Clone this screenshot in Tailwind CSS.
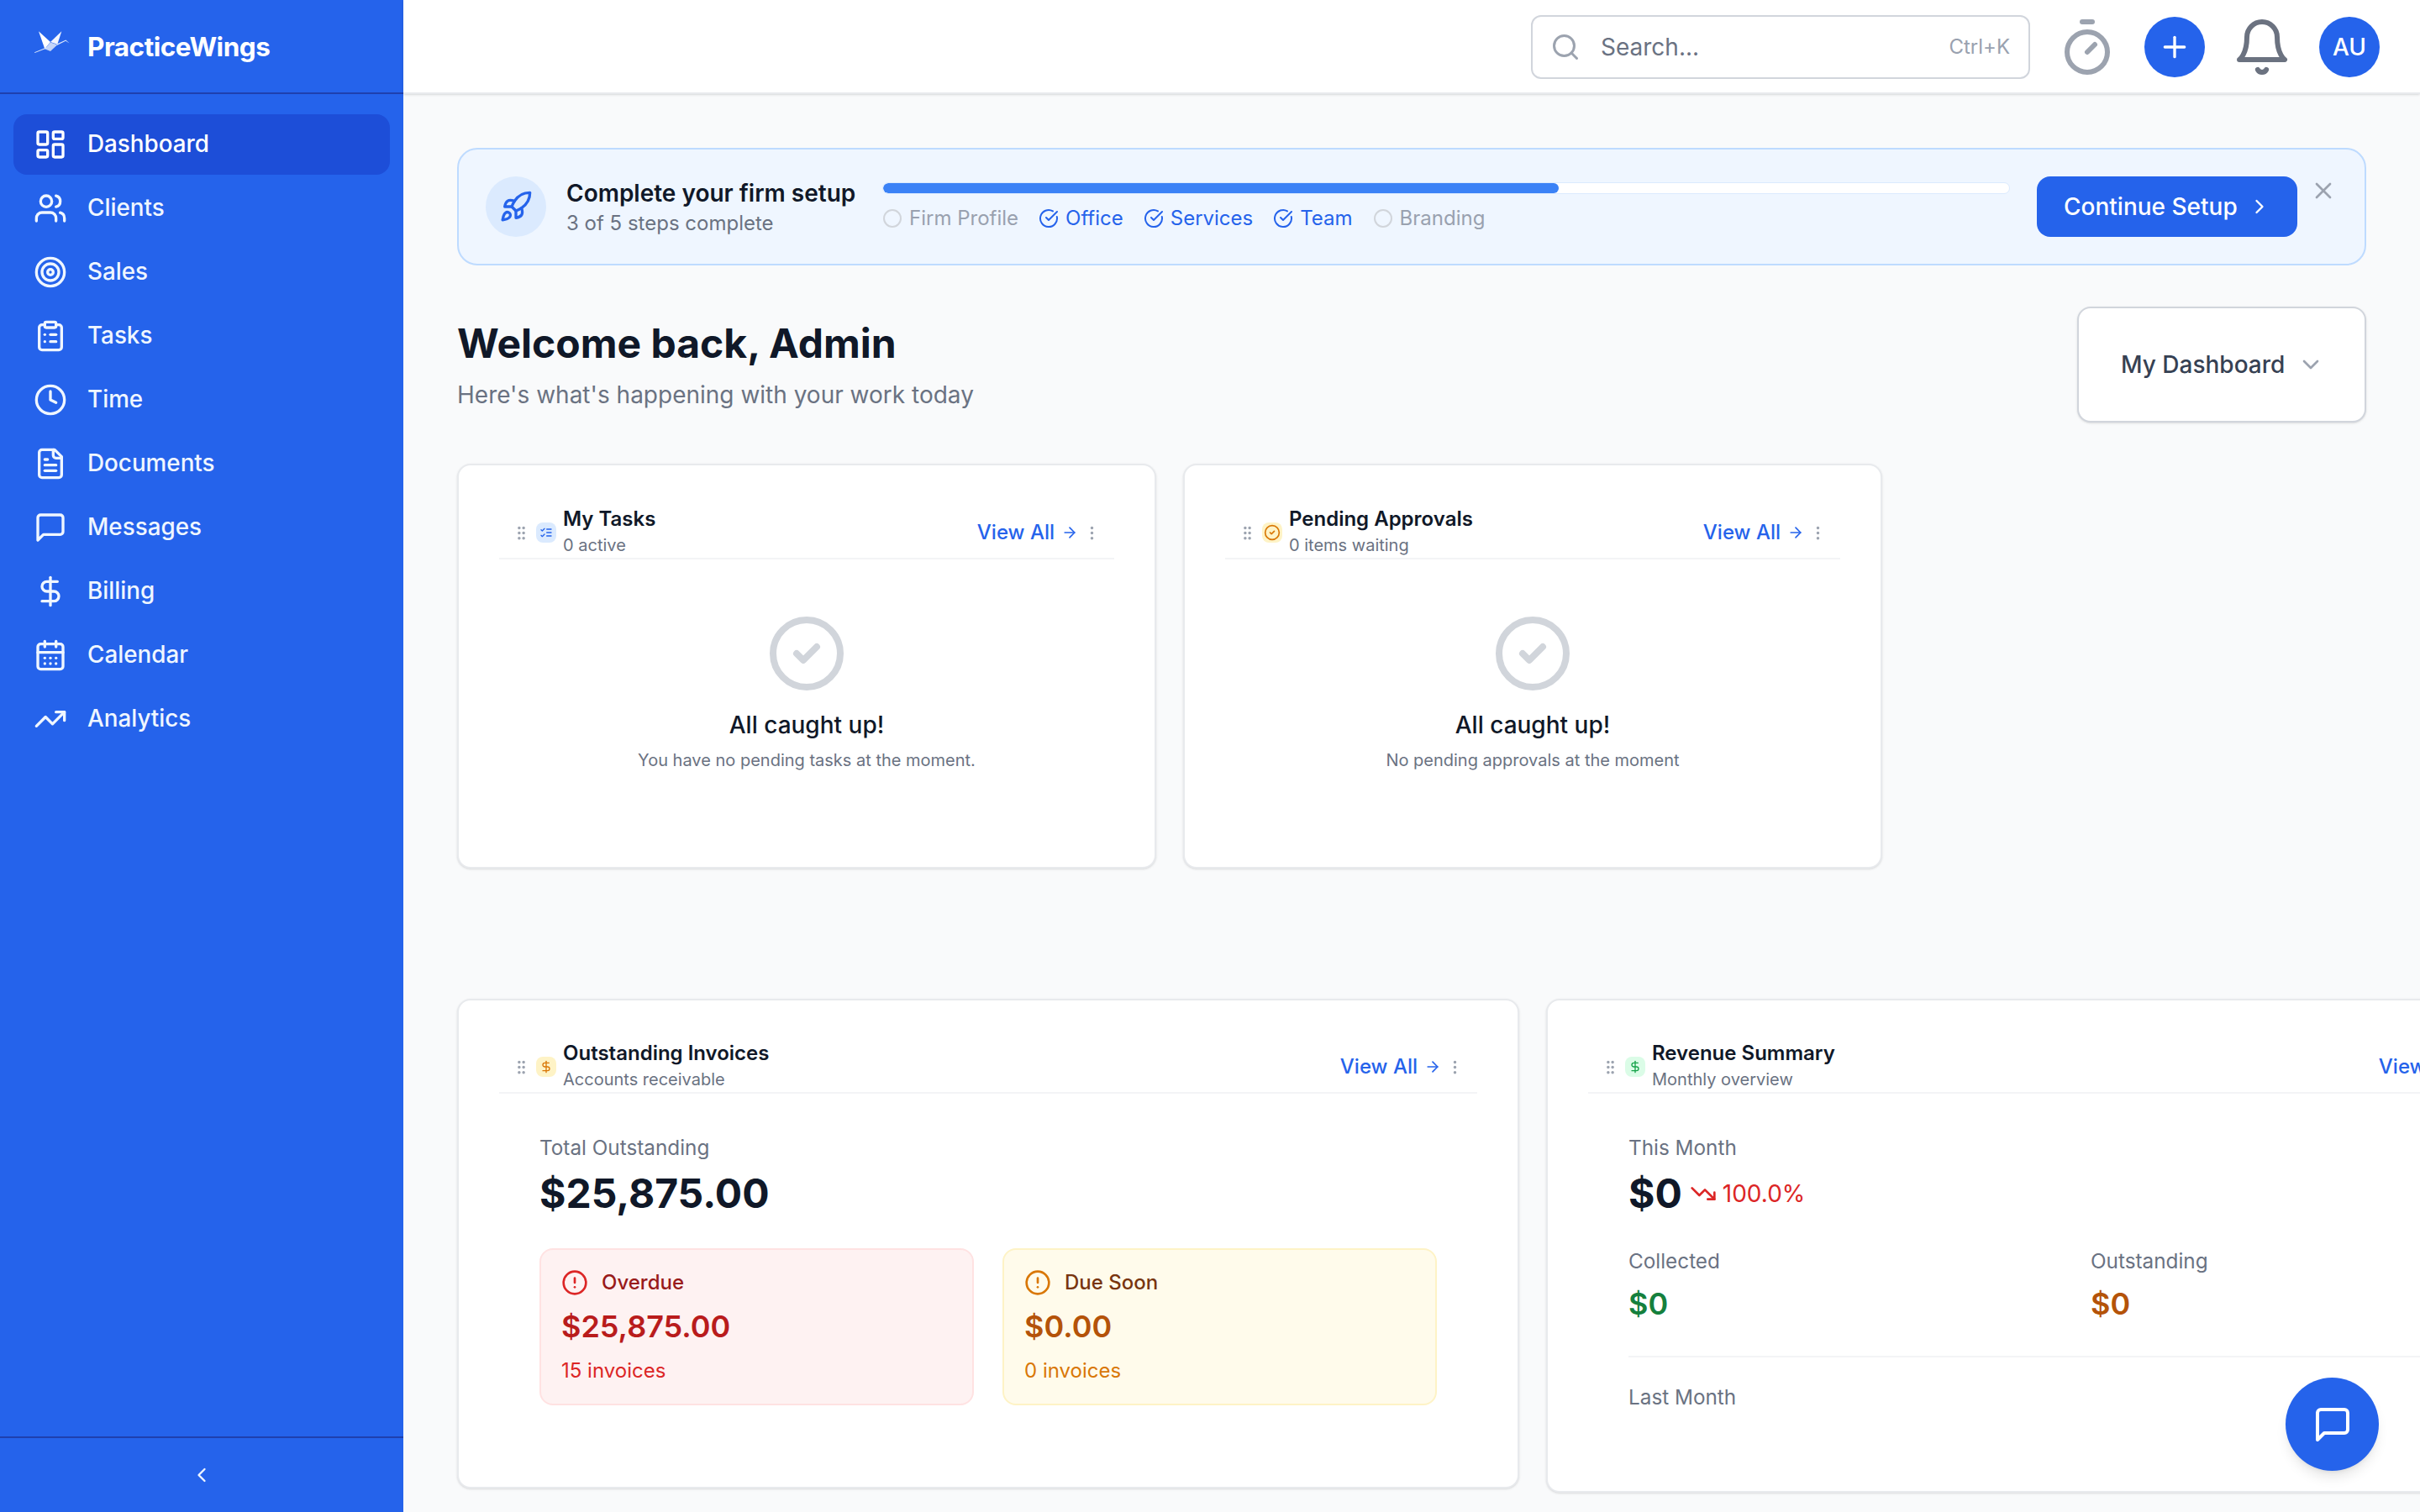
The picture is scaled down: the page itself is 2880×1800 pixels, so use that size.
<!DOCTYPE html>
<html lang="en">
<head>
  <meta charset="UTF-8" />
  <title>PracticeWings</title>
  <script src="https://cdn.jsdelivr.net/npm/@tailwindcss/browser@4"></script>
</head>
<body class="bg-[#f9fafb]">
<div class="flex h-[1800px] w-[2880px] overflow-hidden relative font-[Inter,sans-serif] text-gray-900">

  <!-- Sidebar -->
  <aside class="w-[480px] shrink-0 bg-[#2563eb] flex flex-col text-blue-50">
    <div class="h-[112px] shrink-0 border-b-2 border-[#1e40af] pl-[41px] pt-[2px] flex items-center">
      <svg width="42" height="27" viewBox="0 0 42 27" class="shrink-0 mb-[11px]">
        <polygon points="5,0.3 19,13 12.3,21.3" fill="#ffffff"/>
        <polygon points="32.3,0.3 19,13 27.3,15.7" fill="#f3f6fe"/>
        <polygon points="12.3,21.3 19,13.4 27.3,16.3 19,24" fill="#c4d5f8"/>
        <polygon points="0,25.3 14,19.4 14.6,20.6 0.4,26" fill="#dbe6fc"/>
        <polygon points="26,15.7 37.3,10.4 41.6,14.4 37.1,11.8 27.3,16.7" fill="#dbe6fc"/>
      </svg>
      <span class="ml-[21px] text-[31.5px] leading-[40px] font-bold text-white tracking-[-0.5px]">PracticeWings</span>
    </div>
    <nav class="flex-1 pt-6 px-4 flex flex-col gap-1 text-[27.8px] font-medium">
      <a class="h-[72px] rounded-2xl bg-[#1d4ed8] pl-6 flex items-center gap-[24px] text-white">
        <svg width="40" height="40" viewBox="0 0 24 24" fill="none" stroke="currentColor" stroke-width="2" stroke-linecap="round" stroke-linejoin="round"><rect x="3" y="3" width="7" height="9" rx="1"/><rect x="14" y="3" width="7" height="5" rx="1"/><rect x="14" y="12" width="7" height="9" rx="1"/><rect x="3" y="16" width="7" height="5" rx="1"/></svg>
        Dashboard
      </a>
      <a class="h-[72px] rounded-2xl pl-6 flex items-center gap-[24px]">
        <svg width="40" height="40" viewBox="0 0 24 24" fill="none" stroke="currentColor" stroke-width="2" stroke-linecap="round" stroke-linejoin="round"><path d="M16 21v-2a4 4 0 0 0-4-4H6a4 4 0 0 0-4 4v2"/><circle cx="9" cy="7" r="4"/><path d="M22 21v-2a4 4 0 0 0-3-3.87"/><path d="M16 3.13a4 4 0 0 1 0 7.75"/></svg>
        Clients
      </a>
      <a class="h-[72px] rounded-2xl pl-6 flex items-center gap-[24px]">
        <svg width="40" height="40" viewBox="0 0 24 24" fill="none" stroke="currentColor" stroke-width="2" stroke-linecap="round" stroke-linejoin="round"><circle cx="12" cy="12" r="10"/><circle cx="12" cy="12" r="6"/><circle cx="12" cy="12" r="2"/></svg>
        Sales
      </a>
      <a class="h-[72px] rounded-2xl pl-6 flex items-center gap-[24px]">
        <svg width="40" height="40" viewBox="0 0 24 24" fill="none" stroke="currentColor" stroke-width="2" stroke-linecap="round" stroke-linejoin="round"><rect x="8" y="2" width="8" height="4" rx="1"/><path d="M16 4h2a2 2 0 0 1 2 2v14a2 2 0 0 1-2 2H6a2 2 0 0 1-2-2V6a2 2 0 0 1 2-2h2"/><path d="M12 11h4"/><path d="M12 16h4"/><path d="M8 11h.01"/><path d="M8 16h.01"/></svg>
        Tasks
      </a>
      <a class="h-[72px] rounded-2xl pl-6 flex items-center gap-[24px]">
        <svg width="40" height="40" viewBox="0 0 24 24" fill="none" stroke="currentColor" stroke-width="2" stroke-linecap="round" stroke-linejoin="round"><circle cx="12" cy="12" r="10"/><polyline points="12 6 12 12 16 14"/></svg>
        Time
      </a>
      <a class="h-[72px] rounded-2xl pl-6 flex items-center gap-[24px]">
        <svg width="40" height="40" viewBox="0 0 24 24" fill="none" stroke="currentColor" stroke-width="2" stroke-linecap="round" stroke-linejoin="round"><path d="M15 2H6a2 2 0 0 0-2 2v16a2 2 0 0 0 2 2h12a2 2 0 0 0 2-2V7Z"/><path d="M14 2v4a2 2 0 0 0 2 2h4"/><path d="M10 9H8"/><path d="M16 13H8"/><path d="M16 17H8"/></svg>
        Documents
      </a>
      <a class="h-[72px] rounded-2xl pl-6 flex items-center gap-[24px]">
        <svg width="40" height="40" viewBox="0 0 24 24" fill="none" stroke="currentColor" stroke-width="2" stroke-linecap="round" stroke-linejoin="round"><path d="M21 15a2 2 0 0 1-2 2H7l-4 4V5a2 2 0 0 1 2-2h14a2 2 0 0 1 2 2z"/></svg>
        Messages
      </a>
      <a class="h-[72px] rounded-2xl pl-6 flex items-center gap-[24px]">
        <svg width="40" height="40" viewBox="0 0 24 24" fill="none" stroke="currentColor" stroke-width="2" stroke-linecap="round" stroke-linejoin="round"><line x1="12" y1="2" x2="12" y2="22"/><path d="M17 5H9.5a3.5 3.5 0 0 0 0 7h5a3.5 3.5 0 0 1 0 7H6"/></svg>
        Billing
      </a>
      <a class="h-[72px] rounded-2xl pl-6 flex items-center gap-[24px]">
        <svg width="40" height="40" viewBox="0 0 24 24" fill="none" stroke="currentColor" stroke-width="2" stroke-linecap="round" stroke-linejoin="round"><path d="M8 2v4"/><path d="M16 2v4"/><rect x="3" y="4" width="18" height="18" rx="2"/><path d="M3 10h18"/><path d="M8 14h.01"/><path d="M12 14h.01"/><path d="M16 14h.01"/><path d="M8 18h.01"/><path d="M12 18h.01"/><path d="M16 18h.01"/></svg>
        Calendar
      </a>
      <a class="h-[72px] rounded-2xl pl-6 flex items-center gap-[24px]">
        <svg width="40" height="40" viewBox="0 0 24 24" fill="none" stroke="currentColor" stroke-width="2" stroke-linecap="round" stroke-linejoin="round"><polyline points="22 7 13.5 15.5 8.5 10.5 2 17"/><polyline points="16 7 22 7 22 13"/></svg>
        Analytics
      </a>
    </nav>
    <div class="h-[90px] shrink-0 border-t-2 border-[#1e40af] flex items-center justify-center">
      <svg width="28" height="28" viewBox="0 0 24 24" fill="none" stroke="currentColor" stroke-width="2" stroke-linecap="round" stroke-linejoin="round"><path d="m15 18-6-6 6-6"/></svg>
    </div>
  </aside>

  <div class="flex-1 min-w-0 flex flex-col">
    <!-- Top bar -->
    <header class="h-[112px] shrink-0 bg-white border-b-2 border-[#e8eaed] shadow-sm pr-12 pt-[2px] flex items-center justify-end gap-8">
      <div class="w-[594px] h-[76px] rounded-xl border-2 border-gray-300 pl-[21px] pr-[22px] flex items-center">
        <svg width="36" height="36" viewBox="0 0 24 24" fill="none" stroke="#9ca3af" stroke-width="2" stroke-linecap="round" stroke-linejoin="round"><circle cx="11" cy="11" r="8"/><path d="m21 21-4.3-4.3"/></svg>
        <span class="ml-[24px] text-[28px] text-gray-500 flex-1">Search...</span>
        <span class="text-[24px] text-gray-400">Ctrl+K</span>
      </div>
      <svg width="72" height="72" viewBox="0 0 24 24" fill="none" stroke="#9ca3af" stroke-width="2" stroke-linecap="round" stroke-linejoin="round"><line x1="10" y1="2" x2="14" y2="2"/><line x1="12" y1="14" x2="15" y2="11"/><circle cx="12" cy="14" r="8"/></svg>
      <div class="w-[72px] h-[72px] rounded-full bg-[#2563eb] flex items-center justify-center">
        <svg width="40" height="40" viewBox="0 0 24 24" fill="none" stroke="#fff" stroke-width="2" stroke-linecap="round" stroke-linejoin="round"><path d="M5 12h14"/><path d="M12 5v14"/></svg>
      </div>
      <svg width="72" height="72" viewBox="0 0 24 24" fill="none" stroke="#6b7280" stroke-width="2" stroke-linecap="round" stroke-linejoin="round"><path d="M6 8a6 6 0 0 1 12 0c0 7 3 9 3 9H3s3-2 3-9"/><path d="M10.3 21a1.94 1.94 0 0 0 3.4 0"/></svg>
      <div class="w-[72px] h-[72px] rounded-full bg-[#2563eb] flex items-center justify-center text-white text-[28px] font-medium">AU</div>
    </header>

    <main class="flex-1 min-h-0 pl-16 pt-16">
      <!-- Setup banner -->
      <section class="w-[2272px] h-[140px] rounded-3xl border-2 border-blue-200 bg-blue-50 pl-8 flex items-center relative">
        <div class="w-[72px] h-[72px] rounded-full bg-blue-100 flex items-center justify-center shrink-0">
          <svg width="40" height="40" viewBox="0 0 24 24" fill="none" stroke="#2563eb" stroke-width="2" stroke-linecap="round" stroke-linejoin="round"><path d="M4.5 16.5c-1.5 1.26-2 5-2 5s3.74-.5 5-2c.71-.84.7-2.13-.09-2.91a2.18 2.18 0 0 0-2.91-.09z"/><path d="m12 15-3-3a22 22 0 0 1 2-3.95A12.88 12.88 0 0 1 22 2c0 2.72-.78 7.5-6 11a22.35 22.35 0 0 1-4 2z"/><path d="M9 12H4s.55-3.03 2-4c1.62-1.08 5 0 5 0"/><path d="M12 15v5s3.03-.55 4-2c1.08-1.62 0-5 0-5"/></svg>
        </div>
        <div class="ml-6 mt-[4px] w-[376px] shrink-0">
          <div class="text-[28px] leading-[36px] font-semibold text-gray-900">Complete your firm setup</div>
          <div class="text-[24px] leading-[36px] text-gray-500">3 of 5 steps complete</div>
        </div>
        <div class="w-[1342px] shrink-0">
          <div class="h-[14px] rounded-full bg-white border border-blue-100 overflow-hidden">
            <div class="h-full w-[60%] rounded-full bg-[#3b82f6]"></div>
          </div>
          <div class="mt-[13px] flex items-center gap-[24px] text-[24px] leading-[32px]">
            <span class="flex items-center gap-[8px] text-gray-400"><svg width="24" height="24" viewBox="0 0 24 24" fill="none" stroke="#d1d5db" stroke-width="2"><circle cx="12" cy="12" r="10"/></svg>Firm Profile</span>
            <span class="flex items-center gap-[8px] text-[#2563eb]"><svg width="24" height="24" viewBox="0 0 24 24" fill="none" stroke="currentColor" stroke-width="2" stroke-linecap="round" stroke-linejoin="round"><path d="M21.801 10A10 10 0 1 1 17 3.335"/><path d="m9 11 3 3L22 4"/></svg>Office</span>
            <span class="flex items-center gap-[8px] text-[#2563eb]"><svg width="24" height="24" viewBox="0 0 24 24" fill="none" stroke="currentColor" stroke-width="2" stroke-linecap="round" stroke-linejoin="round"><path d="M21.801 10A10 10 0 1 1 17 3.335"/><path d="m9 11 3 3L22 4"/></svg>Services</span>
            <span class="flex items-center gap-[8px] text-[#2563eb]"><svg width="24" height="24" viewBox="0 0 24 24" fill="none" stroke="currentColor" stroke-width="2" stroke-linecap="round" stroke-linejoin="round"><path d="M21.801 10A10 10 0 1 1 17 3.335"/><path d="m9 11 3 3L22 4"/></svg>Team</span>
            <span class="flex items-center gap-[8px] text-gray-400"><svg width="24" height="24" viewBox="0 0 24 24" fill="none" stroke="#d1d5db" stroke-width="2"><circle cx="12" cy="12" r="10"/></svg>Branding</span>
          </div>
        </div>
        <button class="ml-8 w-[310px] h-[72px] rounded-2xl bg-[#2563eb] text-white text-[28px] font-medium flex items-center pl-8 gap-[12px]">
          Continue Setup
          <svg width="28" height="28" viewBox="0 0 24 24" fill="none" stroke="currentColor" stroke-width="2" stroke-linecap="round" stroke-linejoin="round"><path d="m9 18 6-6-6-6"/></svg>
        </button>
        <svg class="absolute right-[33px] top-[33px]" width="32" height="32" viewBox="0 0 24 24" fill="none" stroke="#9ca3af" stroke-width="2" stroke-linecap="round" stroke-linejoin="round"><path d="M18 6 6 18"/><path d="m6 6 12 12"/></svg>
      </section>

      <!-- Greeting -->
      <div class="w-[2272px] mt-[49px] flex items-start justify-between">
        <div class="pt-[16px]">
          <h1 class="text-[48px] leading-[56px] font-bold text-gray-900">Welcome back, Admin</h1>
          <p class="mt-[13px] text-[28px] leading-[40px] text-gray-500">Here's what's happening with your work today</p>
        </div>
        <div class="w-[344px] h-[138px] rounded-2xl border-2 border-gray-300 bg-white shadow-sm pl-[50px] flex items-center gap-[15px] text-[28px] text-gray-700 font-medium">
          My Dashboard
          <svg width="32" height="32" viewBox="0 0 24 24" fill="none" stroke="#9ca3af" stroke-width="2" stroke-linecap="round" stroke-linejoin="round"><path d="m6 9 6 6 6-6"/></svg>
        </div>
      </div>

      <!-- Widgets, first row -->
      <div class="mt-[49px] flex gap-8">
        <div class="w-[832px] h-[482px] rounded-2xl border-2 border-[#e8eaed] bg-white shadow-sm px-12 pt-[50px]">
          <div class="h-[62px] border-b-2 border-gray-100 pl-4 pr-4 flex items-center">
            <svg width="21" height="21" viewBox="0 0 24 24" fill="#9ca3af" stroke="#9ca3af" stroke-width="2"><circle cx="9" cy="12" r="1"/><circle cx="9" cy="5" r="1"/><circle cx="9" cy="19" r="1"/><circle cx="15" cy="12" r="1"/><circle cx="15" cy="5" r="1"/><circle cx="15" cy="19" r="1"/></svg>
            <div class="ml-[7px] w-6 h-6 rounded-lg bg-blue-100 flex items-center justify-center">
              <svg width="16" height="16" viewBox="0 0 24 24" fill="none" stroke="#2563eb" stroke-width="2" stroke-linecap="round" stroke-linejoin="round"><path d="m3 17 2 2 4-4"/><path d="m3 7 2 2 4-4"/><path d="M13 6h8"/><path d="M13 12h8"/><path d="M13 18h8"/></svg>
            </div>
            <div class="ml-[8px] flex-1 -mt-[2px]">
              <div class="text-[24px] leading-[30px] font-semibold text-gray-900">My Tasks</div>
              <div class="mt-[2px] text-[20px] leading-[28px] text-gray-500">0 active</div>
            </div>
            <span class="text-[24px] font-medium text-[#2563eb]">View All</span>
            <svg class="ml-[8px] mr-[6px]" width="20" height="20" viewBox="0 0 24 24" fill="none" stroke="#2563eb" stroke-width="2" stroke-linecap="round" stroke-linejoin="round"><path d="M5 12h14"/><path d="m12 5 7 7-7 7"/></svg>
            <svg width="21" height="21" viewBox="0 0 24 24" fill="#9ca3af" stroke="#9ca3af" stroke-width="2"><circle cx="12" cy="12" r="1"/><circle cx="12" cy="5" r="1"/><circle cx="12" cy="19" r="1"/></svg>
          </div>
          <div class="pt-16 flex flex-col items-center">
            <svg width="96" height="96" viewBox="0 0 24 24" fill="none" stroke="#d1d5db" stroke-width="2" stroke-linecap="round" stroke-linejoin="round"><circle cx="12" cy="12" r="10"/><path d="m9 12 2 2 4-4"/></svg>
            <div class="mt-[17px] text-[28px] leading-[40px] font-medium text-gray-900">All caught up!</div>
            <div class="mt-2 text-[20px] leading-[28px] text-gray-500">You have no pending tasks at the moment.</div>
          </div>
        </div>

        <div class="w-[832px] h-[482px] rounded-2xl border-2 border-[#e8eaed] bg-white shadow-sm px-12 pt-[50px]">
          <div class="h-[62px] border-b-2 border-gray-100 pl-4 pr-4 flex items-center">
            <svg width="21" height="21" viewBox="0 0 24 24" fill="#9ca3af" stroke="#9ca3af" stroke-width="2"><circle cx="9" cy="12" r="1"/><circle cx="9" cy="5" r="1"/><circle cx="9" cy="19" r="1"/><circle cx="15" cy="12" r="1"/><circle cx="15" cy="5" r="1"/><circle cx="15" cy="19" r="1"/></svg>
            <div class="ml-[7px] w-6 h-6 rounded-lg bg-amber-100 flex items-center justify-center">
              <svg width="20" height="20" viewBox="0 0 24 24" fill="none" stroke="#d97706" stroke-width="2" stroke-linecap="round" stroke-linejoin="round"><circle cx="12" cy="12" r="10"/><path d="m9 12 2 2 4-4"/></svg>
            </div>
            <div class="ml-[8px] flex-1 -mt-[2px]">
              <div class="text-[24px] leading-[30px] font-semibold text-gray-900">Pending Approvals</div>
              <div class="mt-[2px] text-[20px] leading-[28px] text-gray-500">0 items waiting</div>
            </div>
            <span class="text-[24px] font-medium text-[#2563eb]">View All</span>
            <svg class="ml-[8px] mr-[6px]" width="20" height="20" viewBox="0 0 24 24" fill="none" stroke="#2563eb" stroke-width="2" stroke-linecap="round" stroke-linejoin="round"><path d="M5 12h14"/><path d="m12 5 7 7-7 7"/></svg>
            <svg width="21" height="21" viewBox="0 0 24 24" fill="#9ca3af" stroke="#9ca3af" stroke-width="2"><circle cx="12" cy="12" r="1"/><circle cx="12" cy="5" r="1"/><circle cx="12" cy="19" r="1"/></svg>
          </div>
          <div class="pt-16 flex flex-col items-center">
            <svg width="96" height="96" viewBox="0 0 24 24" fill="none" stroke="#d1d5db" stroke-width="2" stroke-linecap="round" stroke-linejoin="round"><circle cx="12" cy="12" r="10"/><path d="m9 12 2 2 4-4"/></svg>
            <div class="mt-[17px] text-[28px] leading-[40px] font-medium text-gray-900">All caught up!</div>
            <div class="mt-2 text-[20px] leading-[28px] text-gray-500">No pending approvals at the moment</div>
          </div>
        </div>
      </div>

      <!-- Widgets, second row -->
      <div class="mt-[155px] flex items-start gap-8">
        <div class="w-[1264px] h-[583px] shrink-0 rounded-2xl border-2 border-[#e8eaed] bg-white shadow-sm px-12 pt-[49px]">
          <div class="h-[62px] border-b-2 border-gray-100 pl-4 pr-4 flex items-center">
            <svg width="21" height="21" viewBox="0 0 24 24" fill="#9ca3af" stroke="#9ca3af" stroke-width="2"><circle cx="9" cy="12" r="1"/><circle cx="9" cy="5" r="1"/><circle cx="9" cy="19" r="1"/><circle cx="15" cy="12" r="1"/><circle cx="15" cy="5" r="1"/><circle cx="15" cy="19" r="1"/></svg>
            <div class="ml-[7px] w-6 h-6 rounded-lg bg-amber-100 flex items-center justify-center">
              <svg width="16" height="16" viewBox="0 0 24 24" fill="none" stroke="#d97706" stroke-width="2" stroke-linecap="round" stroke-linejoin="round"><line x1="12" y1="2" x2="12" y2="22"/><path d="M17 5H9.5a3.5 3.5 0 0 0 0 7h5a3.5 3.5 0 0 1 0 7H6"/></svg>
            </div>
            <div class="ml-[8px] flex-1 -mt-[2px]">
              <div class="text-[24px] leading-[30px] font-semibold text-gray-900">Outstanding Invoices</div>
              <div class="mt-[2px] text-[20px] leading-[28px] text-gray-500">Accounts receivable</div>
            </div>
            <span class="text-[24px] font-medium text-[#2563eb]">View All</span>
            <svg class="ml-[8px] mr-[6px]" width="20" height="20" viewBox="0 0 24 24" fill="none" stroke="#2563eb" stroke-width="2" stroke-linecap="round" stroke-linejoin="round"><path d="M5 12h14"/><path d="m12 5 7 7-7 7"/></svg>
            <svg width="21" height="21" viewBox="0 0 24 24" fill="#9ca3af" stroke="#9ca3af" stroke-width="2"><circle cx="12" cy="12" r="1"/><circle cx="12" cy="5" r="1"/><circle cx="12" cy="19" r="1"/></svg>
          </div>
          <div class="px-12 pt-12">
            <div class="text-[24.3px] leading-[32px] text-gray-500">Total Outstanding</div>
            <div class="mt-[7px] text-[48px] leading-[64px] font-bold text-gray-900">$25,875.00</div>
            <div class="mt-[33px] grid grid-cols-2 gap-[34px]">
              <div class="h-[187px] rounded-2xl border-2 border-red-100 bg-red-50 px-[24px] pt-[23px]">
                <div class="flex items-center gap-[16px] text-[24px] leading-[32px] font-medium text-[#991b1b]">
                  <svg width="32" height="32" viewBox="0 0 24 24" fill="none" stroke="#dc2626" stroke-width="2" stroke-linecap="round" stroke-linejoin="round"><circle cx="12" cy="12" r="10"/><line x1="12" y1="8" x2="12" y2="12"/><line x1="12" y1="16" x2="12.01" y2="16"/></svg>
                  Overdue
                </div>
                <div class="mt-3 text-[36px] leading-[48px] font-semibold text-[#b91c1c]">$25,875.00</div>
                <div class="mt-[13px] text-[24px] leading-[32px] text-[#dc2626]">15 invoices</div>
              </div>
              <div class="h-[187px] rounded-2xl border-2 border-amber-100 bg-amber-50 px-[24px] pt-[23px]">
                <div class="flex items-center gap-[16px] text-[24px] leading-[32px] font-medium text-[#78350f]">
                  <svg width="32" height="32" viewBox="0 0 24 24" fill="none" stroke="#d97706" stroke-width="2" stroke-linecap="round" stroke-linejoin="round"><circle cx="12" cy="12" r="10"/><line x1="12" y1="8" x2="12" y2="12"/><line x1="12" y1="16" x2="12.01" y2="16"/></svg>
                  Due Soon
                </div>
                <div class="mt-3 text-[36px] leading-[48px] font-semibold text-[#b45309]">$0.00</div>
                <div class="mt-[13px] text-[24px] leading-[32px] text-[#d97706]">0 invoices</div>
              </div>
            </div>
          </div>
        </div>

        <div class="w-[1204px] h-[588px] shrink-0 rounded-2xl border-2 border-[#e8eaed] bg-white shadow-sm px-12 pt-[49px]">
          <div class="h-[62px] border-b-2 border-gray-100 pl-4 pr-4 flex items-center">
            <svg width="21" height="21" viewBox="0 0 24 24" fill="#9ca3af" stroke="#9ca3af" stroke-width="2"><circle cx="9" cy="12" r="1"/><circle cx="9" cy="5" r="1"/><circle cx="9" cy="19" r="1"/><circle cx="15" cy="12" r="1"/><circle cx="15" cy="5" r="1"/><circle cx="15" cy="19" r="1"/></svg>
            <div class="ml-[7px] w-6 h-6 rounded-lg bg-green-100 flex items-center justify-center">
              <svg width="16" height="16" viewBox="0 0 24 24" fill="none" stroke="#16a34a" stroke-width="2" stroke-linecap="round" stroke-linejoin="round"><line x1="12" y1="2" x2="12" y2="22"/><path d="M17 5H9.5a3.5 3.5 0 0 0 0 7h5a3.5 3.5 0 0 1 0 7H6"/></svg>
            </div>
            <div class="ml-[8px] flex-1 -mt-[2px]">
              <div class="text-[24px] leading-[30px] font-semibold text-gray-900">Revenue Summary</div>
              <div class="mt-[2px] text-[20px] leading-[28px] text-gray-500">Monthly overview</div>
            </div>
            <span class="text-[24px] font-medium text-[#2563eb]">View All</span>
            <svg class="ml-[8px] mr-[6px]" width="20" height="20" viewBox="0 0 24 24" fill="none" stroke="#2563eb" stroke-width="2" stroke-linecap="round" stroke-linejoin="round"><path d="M5 12h14"/><path d="m12 5 7 7-7 7"/></svg>
            <svg width="21" height="21" viewBox="0 0 24 24" fill="#9ca3af" stroke="#9ca3af" stroke-width="2"><circle cx="12" cy="12" r="1"/><circle cx="12" cy="5" r="1"/><circle cx="12" cy="19" r="1"/></svg>
          </div>
          <div class="px-12 pt-12">
            <div class="text-[24.3px] leading-[32px] text-gray-500">This Month</div>
            <div class="mt-[7px] flex items-center">
              <span class="text-[48px] leading-[64px] font-bold text-gray-900">$0</span>
              <svg class="ml-[9px]" width="32" height="32" viewBox="0 0 24 24" fill="none" stroke="#dc2626" stroke-width="2" stroke-linecap="round" stroke-linejoin="round"><polyline points="22 17 13.5 8.5 8.5 13.5 2 7"/><polyline points="16 17 22 17 22 11"/></svg>
              <span class="ml-[7px] text-[28px] text-[#dc2626]">100.0%</span>
            </div>
            <div class="mt-8 grid grid-cols-[550px_1fr]">
              <div>
                <div class="text-[24.3px] leading-[32px] text-gray-500">Collected</div>
                <div class="mt-[11px] text-[36px] leading-[48px] font-semibold text-[#15803d]">$0</div>
              </div>
              <div>
                <div class="text-[24.3px] leading-[32px] text-gray-500">Outstanding</div>
                <div class="mt-[11px] text-[36px] leading-[48px] font-semibold text-[#b45309]">$0</div>
              </div>
            </div>
            <div class="mt-[38px] border-t-2 border-gray-100 pt-[31px] text-[24.3px] leading-[32px] text-gray-500">Last Month</div>
          </div>
        </div>
      </div>
    </main>
  </div>

  <!-- Floating chat button -->
  <button class="absolute left-[2720px] top-[1640px] w-[111px] h-[111px] rounded-full bg-[#2563eb] shadow-lg flex items-center justify-center">
    <svg width="48" height="48" viewBox="0 0 24 24" fill="none" stroke="#fff" stroke-width="2" stroke-linecap="round" stroke-linejoin="round"><path d="M21 15a2 2 0 0 1-2 2H7l-4 4V5a2 2 0 0 1 2-2h14a2 2 0 0 1 2 2z"/></svg>
  </button>
</div>
</body>
</html>
